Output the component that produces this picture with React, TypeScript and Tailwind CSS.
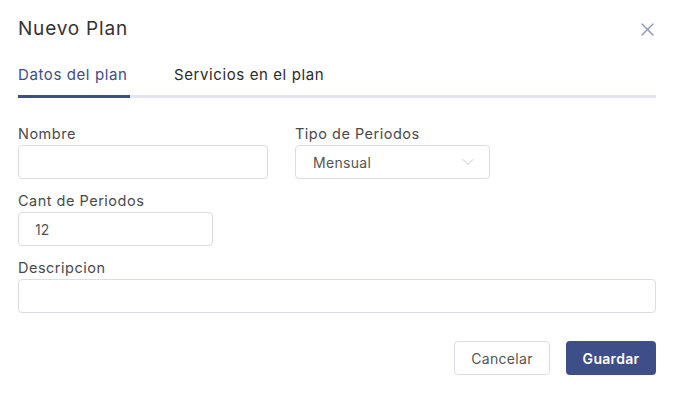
import { ChevronDown } from "lucide-react";

const font = { fontFamily: '"Inter", "Noto Sans", sans-serif' };

function Field({ label, children, className = "" }: { label: string; children: React.ReactNode; className?: string }) {
  return (
    <div className={`flex flex-col ${className}`}>
      <label className="text-[14.5px] leading-[18px] tracking-[0.5px] text-[#4a4a4a] mb-[2px]">{label}</label>
      {children}
    </div>
  );
}

export default function App() {
  return (
    <div className="w-[673px] h-[405px] bg-white" style={font}>
      <div className="px-[18px] pt-[16px]">
        <div className="flex items-center justify-between h-[26px]">
          <h2 className="text-[19px] tracking-[0.8px] text-[#333333]">Nuevo Plan</h2>
          <svg width="13" height="13" viewBox="0 0 13 13" className="mr-[1px]" fill="none" stroke="#8b94b3" strokeWidth="1.3" strokeLinecap="round">
            <path d="M1 1L12 12M12 1L1 12" />
          </svg>
        </div>

        <div className="mt-[24px] flex border-b-[3px] border-[#e4e5ec] w-[638px]">
          <div className="-mb-[3px] border-b-[3px] border-[#3d4e88] w-[112px] pb-[11px] text-[15px] leading-[18px] tracking-[0.6px] text-[#3d4e88]">
            Datos del plan
          </div>
          <div className="ml-[44px] pb-[11px] text-[15px] leading-[18px] tracking-[0.6px] text-[#2b2b2b]">
            Servicios en el plan
          </div>
        </div>

        <div className="mt-[27px] flex gap-[27px]">
          <Field label="Nombre">
            <input className="w-[250px] h-[34px] rounded-[4px] border border-[#dcdde3] outline-none" />
          </Field>
          <Field label="Tipo de Periodos">
            <div className="w-[195px] h-[34px] rounded-[4px] border border-[#dcdde3] flex items-center justify-between pl-[17px] pr-[11px]">
              <span className="text-[14px] tracking-[0.3px] text-[#555]">Mensual</span>
              <ChevronDown className="w-[20px] h-[20px] text-[#b8bac4]" strokeWidth={1} />
            </div>
          </Field>
        </div>

        <Field label="Cant de Periodos" className="mt-[13px]">
          <div className="w-[195px] h-[34px] rounded-[4px] border border-[#dcdde3] flex items-center pl-[16px] text-[14px] text-[#555]">
            12
          </div>
        </Field>

        <Field label="Descripcion" className="mt-[13px]">
          <input className="w-[638px] h-[34px] rounded-[4px] border border-[#dcdde3] outline-none" />
        </Field>

        <div className="mt-[28px] flex justify-end gap-[16px] w-[638px]">
          <button className="w-[96px] h-[34px] rounded-[4px] border border-[#dcdde3] text-[14px] tracking-[0.3px] text-[#555] bg-white">
            Cancelar
          </button>
          <button className="w-[90px] h-[34px] rounded-[4px] bg-[#3d4e88] text-[14px] font-semibold tracking-[0.3px] text-white">
            Guardar
          </button>
        </div>
      </div>
    </div>
  );
}
